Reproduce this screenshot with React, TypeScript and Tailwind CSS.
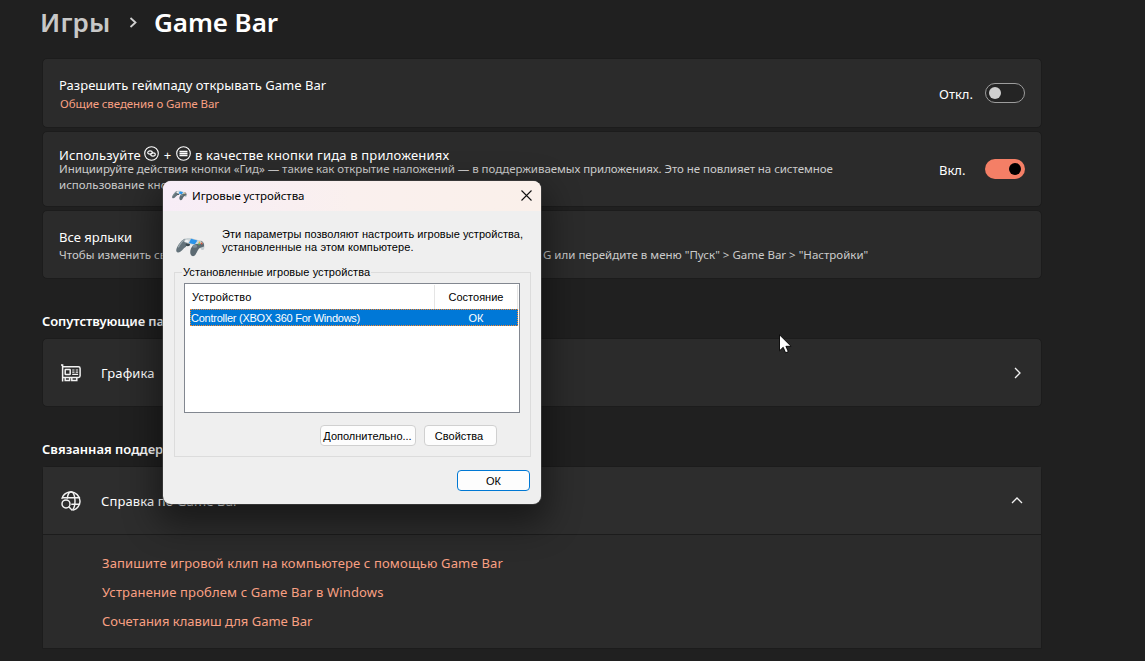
import type { ReactNode } from "react";

const LINKS = [
  { text: "Запишите игровой клип на компьютере с помощью Game Bar", tracking: "tracking-[0.155px]" },
  { text: "Устранение проблем с Game Bar в Windows", tracking: "tracking-[0.14px]" },
  { text: "Сочетания клавиш для Game Bar", tracking: "tracking-[0px]" },
];

function Card({ className, children }: { className: string; children: ReactNode }) {
  return (
    <div className={`flex w-[1000px] shrink-0 rounded-[5px] border border-[#1c1c1c] bg-[#2b2b2b] ${className}`}>
      {children}
    </div>
  );
}

function Toggle({ on }: { on: boolean }) {
  return on ? (
    <span className="flex h-5 w-10 items-center justify-end rounded-full bg-[#f47f66] pr-1">
      <span className="size-3 rounded-full bg-black" />
    </span>
  ) : (
    <span className="flex h-5 w-10 items-center rounded-full border border-[#9d9d9d] bg-[#242424] pl-[3px]">
      <span className="size-3 rounded-full bg-[#cfcfcf]" />
    </span>
  );
}

function ViewGlyph() {
  return (
    <svg width="15" height="15" viewBox="0 0 15 15" fill="none" stroke="#fff" strokeWidth="1.1">
      <circle cx="7.5" cy="7.5" r="6.8" />
      <ellipse cx="6" cy="6.5" rx="2.3" ry="1.6" />
      <ellipse cx="9" cy="8.5" rx="2.3" ry="1.6" />
    </svg>
  );
}

function MenuGlyph() {
  return (
    <svg width="15" height="15" viewBox="0 0 15 15" fill="none" stroke="#fff" strokeWidth="1.1">
      <circle cx="7.5" cy="7.5" r="6.8" />
      <path d="M3.5 5.5h8M3.5 7.5h8M3.5 9.5h8" strokeWidth="1.4" />
    </svg>
  );
}

function GpuIcon() {
  return (
    <svg width="20" height="18" viewBox="0 0 20 18" fill="none" stroke="#f2f2f2" strokeWidth="1.5">
      <path d="M0 1h1.6v16.4" />
      <path d="M1.6 2.7h15.8a1.7 1.7 0 0 1 1.7 1.7v7.3a1.7 1.7 0 0 1-1.7 1.7H1.6" />
      <rect x="4.2" y="5.5" width="5" height="5" rx=".6" />
      <path d="M11.2 6h2.3M14.7 6h2.4M11.2 8.1h2.3M14.7 8.1h2.4M11.2 10.4h5.9" strokeWidth="1.1" />
      <path d="M4.2 13.4v3h4.4v-3M10.8 13.4v3h5v-3" />
    </svg>
  );
}

function GlobeSearchIcon() {
  return (
    <svg width="20" height="20" viewBox="0 0 20 20" fill="none" stroke="#f2f2f2" strokeWidth="1.45" strokeLinecap="round">
      <path d="M1 7.4A9.2 9.2 0 1 1 12.8 18.9" />
      <path d="M6.3 7C6.9 3.3 8.4.8 10.2.8c2.2 0 3.8 4.1 3.8 9.2 0 3.8-.8 7-2.2 8.7" />
      <path d="M2 6.7h16.5M10.8 13.2h7.7" />
      <circle cx="5" cy="12.9" r="4" />
      <path d="m8 15.9 2.9 3" />
    </svg>
  );
}

function Gamepad({ width, height }: { width: number; height: number }) {
  return (
    <svg width={width} height={height} viewBox="0 0 29 20">
      <path d="M8 3C10 .8 13 .6 16 1.4l9 2.4c3 1 4 4.5 3.2 7.6-.6 2.2-2.6 2.2-3.6 0L22 8 9 7z" fill="#c3ccd0" />
      <path d="M9 1.8c-3 .8-6 5-8 8.6-1.2 2.4-1 4.6.6 5 3.6.6 5.2-4 8.4-5.6L12 5z" fill="#64737b" />
      <path d="M17 8.5c-2.3 2.2-3.4 6-2.4 8.7 1 2.5 3.4 2.6 5 .4 1.6-2.3 2-5.6 5.4-7l3-1c.4-3-1-5-3-5.8z" fill="#5c6a72" />
      <path d="M9.5 2.2c-3 1.4-5.5 4.8-7.3 8.2" stroke="#98a5ab" strokeWidth="1.3" fill="none" />
      <path d="M9 2.6c2-1.6 5-1.5 7-1l9 2.6c1 .5 1.6 1.3 2 2.3l-9 .8-7-1z" fill="#cdd5d8" />
      <path d="m15 1.8 6.5 1.8-2.8 4-5.7-1.6z" fill="#2a94ea" />
      <ellipse cx="10.5" cy="4.3" rx="2.3" ry="1.3" fill="#f1f4f5" />
      <ellipse cx="11.8" cy="7.8" rx="2.3" ry="1.4" fill="#3a4850" />
      <ellipse cx="18.8" cy="9.3" rx="2.4" ry="1.5" fill="#7f8e95" />
      <circle cx="23.5" cy="5.3" r=".9" fill="#e4b53b" />
      <circle cx="25.6" cy="6.5" r=".9" fill="#d9573c" />
      <circle cx="23" cy="7.2" r=".9" fill="#5da753" />
    </svg>
  );
}

function DeviceDialog() {
  return (
    <div className="absolute left-[163px] top-[181px] flex h-[323px] w-[378px] flex-col overflow-hidden rounded-lg bg-[#efefef] font-['Liberation_Sans',Arial,sans-serif] text-[11px] leading-[13px] text-black shadow-[0_0_0_1px_rgba(70,70,70,0.6),0_14px_34px_6px_rgba(0,0,0,0.45)]">
      <div className="flex h-[30px] shrink-0 items-center bg-linear-to-r from-[#f7edf7] via-[#faf0ee] to-[#faf0ea] pb-[2px] pl-[9px] pr-[9px]">
        <Gamepad width={15} height={11} />
        <span className="ml-[5px] whitespace-nowrap font-['Noto_Sans','Open_Sans',sans-serif] text-[11.5px] tracking-[-0.06px]">
          Игровые устройства
        </span>
        <svg className="ml-auto" width="11" height="11" viewBox="0 0 11 11" stroke="#111" strokeWidth="1.1">
          <path d="m.5.5 10 10M10.5.5l-10 10" />
        </svg>
      </div>

      <div className="flex h-[55px] shrink-0 pl-[13px] pt-[17px]">
        <div className="w-[46px] pt-[9px]">
          <Gamepad width={29} height={20} />
        </div>
        <p className="whitespace-nowrap">
          <span className="block tracking-[0.04px]">Эти параметры позволяют настроить игровые устройства,</span>
          <span className="block tracking-[0.1px]">установленные на этом компьютере.</span>
        </p>
      </div>

      <fieldset className="mx-[11px] h-[191px] w-[357px] shrink-0 border border-[#dcdcdc] px-[9px]">
        <legend className="-ml-[2px] whitespace-nowrap px-[1px] tracking-[0.09px]">Установленные игровые устройства</legend>
        <div className="mt-[4px] flex h-[130px] w-[336px] flex-col border border-[#828790] bg-white pl-[5px] pr-px pt-px">
          <div className="flex h-[24px] items-center">
            <span className="w-[244px] pl-[2px] tracking-[0.2px]">Устройство</span>
            <span className="flex h-full flex-1 items-center justify-center border-x border-[#e5e5e5]">Состояние</span>
          </div>
          <div className="flex h-[17px] items-center border border-dotted border-[#ff8728] bg-[#0078d7] pt-[2px] text-white">
            <span className="w-[244px] whitespace-nowrap tracking-[-0.25px]">Controller (XBOX 360 For Windows)</span>
            <span className="flex-1 text-center">ОК</span>
          </div>
        </div>
        <div className="mt-3 flex gap-2 pl-[136px]">
          <button className="h-[21px] w-[96px] whitespace-nowrap rounded border border-[#d0d0d0] bg-[#fdfdfd] pr-[1px] pt-[2px]">
            Дополнительно...
          </button>
          <button className="h-[21px] w-[73px] rounded border border-[#d0d0d0] bg-[#fdfdfd] pr-[3px] pt-[2px]">
            Свойства
          </button>
        </div>
      </fieldset>

      <div className="mt-[13px] flex justify-end pr-[11px]">
        <button className="h-[21px] w-[73px] rounded border border-[#0078d4] bg-[#fdfdfd] pt-[1px]">ОК</button>
      </div>
    </div>
  );
}

export default function App() {
  return (
    <div className="relative flex h-[661px] w-[1145px] flex-col overflow-hidden bg-[#202020] pl-[42px] font-['Noto_Sans','Open_Sans',sans-serif] text-[13px] leading-[18px] text-white">
      <h1 className="-ml-[2px] flex h-[58px] shrink-0 pt-[4px] text-[26px] font-semibold leading-[36px]">
        <span className="w-[89px] tracking-[0.2px] text-[#c8c8c8]">Игры</span>
        <svg className="mt-[13px] mr-[16px]" width="9" height="11" viewBox="0 0 9 11" fill="none" stroke="#d0d0d0" strokeWidth="1.8">
          <path d="m1.5 1 5 4.5-5 4.5" />
        </svg>
        <span className="tracking-[-0.08px]">Game Bar</span>
      </h1>

      <Card className="h-[70px] items-center px-4">
        <div className="flex flex-col pt-[2px]">
          <span className="tracking-[0.03px]">Разрешить геймпаду открывать Game Bar</span>
          <span className="pl-px text-[11.5px] leading-[19px] tracking-[-0.1px] text-[#f9a083]">
            Общие сведения о Game Bar
          </span>
        </div>
        <span className="ml-auto w-[46px] pt-[2px]">Откл.</span>
        <Toggle on={false} />
      </Card>

      <Card className="mt-[3px] h-[76px] items-center px-4">
        <div className="flex flex-col whitespace-nowrap">
          <div className="flex h-[15px] items-center pt-[3px]">
            <span className="w-[85px] tracking-[0.12px]">Используйте</span>
            <span className="-mt-[3px]"><ViewGlyph /></span>
            <span className="w-[17px] text-center">+</span>
            <span className="-mt-[3px]"><MenuGlyph /></span>
            <span className="ml-1 tracking-[0.19px]">в качестве кнопки гида в приложениях</span>
          </div>
          <p className="text-[11.5px] leading-4 text-[#cbcbcb]">
            <span className="block tracking-[-0.057px]">
              Инициируйте действия кнопки «Гид» — такие как открытие наложений — в поддерживаемых приложениях. Это не повлияет на системное
            </span>
            <span className="block">использование кнопки Xbox.</span>
          </p>
        </div>
        <span className="ml-auto w-[46px] pt-[2px]">Вкл.</span>
        <Toggle on />
      </Card>

      <Card className="mt-[3px] h-[69px] items-center px-4">
        <div className="flex flex-col pt-[3px]">
          <span>Все ярлыки</span>
          <p className="flex whitespace-nowrap text-[11.5px] leading-[18px] text-[#cbcbcb]">
            <span className="w-[484px] overflow-hidden">Чтобы изменить свои ярлыки, нажмите клавиши Windows +</span>
            <span>G или перейдите в меню "Пуск" &gt; Game Bar &gt; "Настройки"</span>
          </p>
        </div>
      </Card>

      <h2 className="mt-[33px] h-[26px] shrink-0 font-semibold tracking-[-0.1px]">Сопутствующие параметры</h2>
      <Card className="h-[69px] items-center pl-[18px] pr-5">
        <GpuIcon />
        <span className="ml-5 tracking-[0.1px]">Графика</span>
        <svg className="ml-auto" width="7" height="12" viewBox="0 0 7 12" fill="none" stroke="#f2f2f2" strokeWidth="1.3">
          <path d="m1 1 5 5-5 5" />
        </svg>
      </Card>

      <h2 className="mt-[33px] h-[26px] shrink-0 font-semibold">Связанная поддержка</h2>
      <div className="flex h-[183px] w-[1000px] shrink-0 flex-col rounded-t-[5px] border border-[#1c1c1c] bg-[#2b2b2b]">
        <div className="flex h-[68px] items-center border-b border-[#1c1c1c] bg-[#2d2d2d] pl-[18px] pr-[18px]">
          <GlobeSearchIcon />
          <span className="ml-5 tracking-[0.1px]">Справка по Game Bar</span>
          <svg className="ml-auto" width="12" height="7" viewBox="0 0 12 7" fill="none" stroke="#f2f2f2" strokeWidth="1.3">
            <path d="m1 6 5-5 5 5" />
          </svg>
        </div>
        <div className="flex flex-col gap-[11px] pl-[59px] pt-[19px] text-[#f9a083]">
          {LINKS.map((link) => (
            <a key={link.text} className={link.tracking}>{link.text}</a>
          ))}
        </div>
      </div>

      <DeviceDialog />

      <svg className="absolute left-[779px] top-[334px]" width="13" height="20" viewBox="0 0 13 20">
        <path d="M.5.8v16l3.7-3.5 2.4 5.5 2.7-1.2-2.4-5.3h5.2z" fill="#fff" stroke="#000" strokeWidth=".9" />
      </svg>
    </div>
  );
}
